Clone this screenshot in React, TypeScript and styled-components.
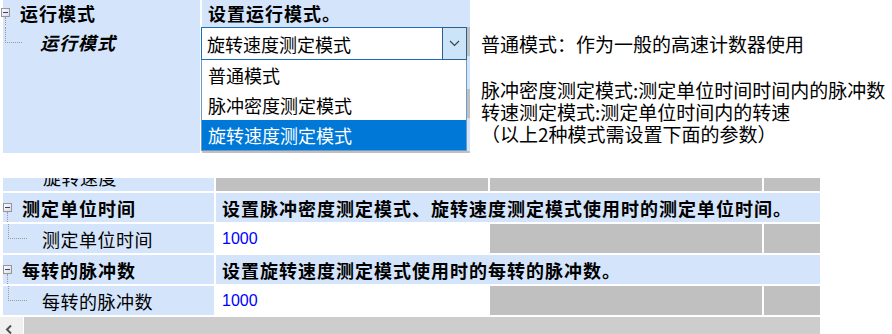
import React from 'react';
import styled, { createGlobalStyle } from 'styled-components';

const LIGHT = '#d4e5fb';
const GRAY = '#c0c0c0';
const CJK = `"Noto Sans CJK SC", "Noto Sans", sans-serif`;

const Global = createGlobalStyle`
  html, body { margin: 0; padding: 0; background: #fff; }
  body { width: 892px; height: 334px; overflow: hidden; font-family: ${CJK}; color: #000; }
  * { box-sizing: border-box; }
`;

const Page = styled.div`
  display: flex;
  flex-direction: column;
  width: 892px;
  height: 334px;
`;

/* ---------- top section ---------- */
const TopSection = styled.div`
  display: flex;
  height: 153px;
  flex-shrink: 0;
`;

const TopPanel = styled.div`
  position: relative;
  width: 470px;
  height: 153px;
  overflow: hidden;
  padding-left: 3px;
  display: flex;
  background: #fff;
`;

const TopLeft = styled.div`
  width: 197px;
  background: ${LIGHT};
  display: flex;
  flex-direction: column;
  gap: 2px;
`;

const TopRight = styled.div`
  flex: 1;
  margin-left: 2px;
  background: ${LIGHT};
  display: flex;
  flex-direction: column;
  gap: 2px;
`;

const TopLabelRow = styled.div<{ $h: number }>`
  height: ${(p) => p.$h}px;
  display: flex;
  align-items: stretch;
  flex-shrink: 0;
`;

const TopRightRow = styled.div<{ $h: number; $kind: 'cat' | 'child' }>`
  height: ${(p) => p.$h}px;
  flex-shrink: 0;
  display: flex;
  align-items: center;
  padding-left: 6px;
  background: ${(p) => (p.$kind === 'cat' ? LIGHT : GRAY)};
  font-weight: 700;
  font-size: 18px;
  letter-spacing: 1px;
  line-height: 1;
  white-space: nowrap;
`;

/* tree decorations */
const TreeIcon = styled.div<{ $left: number; $top: number }>`
  width: 9px;
  margin-left: ${(p) => p.$left}px;
  padding-top: ${(p) => p.$top}px;
  display: flex;
  flex-direction: column;
  align-items: center;
  flex-shrink: 0;
`;

const TreeTail = styled.div`
  flex: 1;
  width: 0;
  border-left: 1px dotted #9a9a9a;
`;

const Connector = styled.div<{ $left: number; $w: number; $h: number }>`
  margin-left: ${(p) => p.$left}px;
  width: ${(p) => p.$w}px;
  height: ${(p) => p.$h}px;
  border-left: 1px dotted #9a9a9a;
  border-bottom: 1px dotted #9a9a9a;
  flex-shrink: 0;
`;

const Label = styled.span<{ $bold?: boolean; $italic?: boolean; $ml: number }>`
  align-self: center;
  margin-left: ${(p) => p.$ml}px;
  font-size: 18px;
  line-height: 1;
  font-weight: ${(p) => (p.$bold ? 700 : 400)};
  font-style: ${(p) => (p.$italic ? 'italic' : 'normal')};
  letter-spacing: ${(p) => (p.$bold ? 1 : 0.5)}px;
  white-space: nowrap;
`;

const MinusBox = () => (
  <svg width="9" height="9" viewBox="0 0 9 9" style={{ display: 'block', flexShrink: 0 }}>
    <defs>
      <linearGradient id="mb" x1="0" y1="0" x2="1" y2="1">
        <stop offset="0" stopColor="#ffffff" />
        <stop offset="1" stopColor="#d8d8e0" />
      </linearGradient>
    </defs>
    <rect x="0.5" y="0.5" width="8" height="8" fill="url(#mb)" stroke="#969696" />
    <line x1="2" y1="4.5" x2="7" y2="4.5" stroke="#3a3a8a" strokeWidth="1" />
  </svg>
);

/* dropdown editor overlay */
const Editor = styled.div`
  position: absolute;
  left: 201px;
  top: 27px;
  width: 266px;
  display: flex;
  flex-direction: column;
  z-index: 2;
`;

const Combo = styled.div`
  height: 33px;
  border: 1px solid #1a6fc0;
  background: #fff;
  display: flex;
  align-items: center;
`;

const ComboText = styled.span`
  flex: 1;
  padding-left: 5px;
  font-size: 18px;
  line-height: 1;
  white-space: nowrap;
`;

const ComboButton = styled.div`
  width: 25px;
  height: 33px;
  margin: -1px -1px -1px 0;
  background: #cce4f7;
  border: 1px solid #2c5f8e;
  display: flex;
  align-items: center;
  justify-content: center;
`;

const List = styled.div`
  border: 1px solid #6f9bc8;
  border-top: none;
  background: #fff;
  display: flex;
  flex-direction: column;
`;

const Option = styled.div<{ $active?: boolean }>`
  height: 30px;
  display: flex;
  align-items: center;
  padding-left: 6px;
  font-size: 18px;
  line-height: 1;
  white-space: nowrap;
  background: ${(p) => (p.$active ? '#0078d7' : '#fff')};
  color: ${(p) => (p.$active ? '#fff' : '#000')};
`;

/* notes */
const Notes = styled.div`
  margin-left: 11px;
  padding-top: 33px;
  display: flex;
  flex-direction: column;
  font-size: 19px;
  line-height: 22px;
  white-space: nowrap;
`;

const NoteBlock = styled.div`
  margin-top: 24px;
  display: flex;
  flex-direction: column;
`;

/* ---------- bottom grid ---------- */
const GridPanel = styled.div`
  margin-top: 25px;
  width: 820px;
  height: 156px;
  display: flex;
  flex-direction: column;
  gap: 2px;
  overflow: hidden;
  flex-shrink: 0;
`;

const Viewport = styled.div`
  height: 137px;
  overflow: hidden;
  padding-left: 3px;
  flex-shrink: 0;
`;

const Rows = styled.div`
  display: flex;
  flex-direction: column;
  gap: 2px;
  margin-top: -16px;
`;

const Row = styled.div`
  display: grid;
  grid-template-columns: 211px 272px 272px 56px;
  column-gap: 2px;
  height: 29px;
  flex-shrink: 0;
`;

const LabelCell = styled.div`
  background: ${LIGHT};
  display: flex;
  align-items: stretch;
  overflow: hidden;
`;

const DescCell = styled.div`
  grid-column: 2 / -1;
  background: ${LIGHT};
  display: flex;
  align-items: center;
  padding-left: 6px;
  font-size: 18px;
  font-weight: 700;
  letter-spacing: 1px;
  line-height: 1;
  white-space: nowrap;
  overflow: hidden;
`;

const ValueCell = styled.div`
  background: #fff;
  display: flex;
  align-items: center;
  padding-left: 6px;
  font-family: "Liberation Sans", Arial, sans-serif;
  font-size: 16px;
  color: #0000ff;
`;

const GrayCell = styled.div`
  background: ${GRAY};
`;

const ScrollBar = styled.div`
  height: 17px;
  display: flex;
  flex-shrink: 0;
`;

const ScrollButton = styled.div`
  width: 23px;
  background: #f0f0f0;
  display: flex;
  align-items: flex-end;
  padding-left: 5px;
`;

const ScrollTrack = styled.div`
  flex: 1;
  margin-left: 1px;
  background: #cdcdcd;
`;

type Item = { cat: string; desc: string; child: string; value: string };

const items: Item[] = [
  {
    cat: '测定单位时间',
    desc: '设置脉冲密度测定模式、旋转速度测定模式使用时的测定单位时间。',
    child: '测定单位时间',
    value: '1000',
  },
  {
    cat: '每转的脉冲数',
    desc: '设置旋转速度测定模式使用时的每转的脉冲数。',
    child: '每转的脉冲数',
    value: '1000',
  },
];

export default function App() {
  return (
    <Page>
      <Global />
      <TopSection>
        <TopPanel>
          <TopLeft>
            <TopLabelRow $h={25}>
              <TreeIcon $left={-2} $top={8}>
                <MinusBox />
                <TreeTail />
              </TreeIcon>
              <Label $bold $ml={10}>运行模式</Label>
            </TopLabelRow>
            <TopLabelRow $h={29}>
              <Connector $left={2} $w={17} $h={16} />
              <Label $bold $italic $ml={18}>运行模式</Label>
            </TopLabelRow>
          </TopLeft>
          <TopRight>
            <TopRightRow $h={25} $kind="cat">设置运行模式。</TopRightRow>
            <TopRightRow $h={29} $kind="child" />
            <TopRightRow $h={29} $kind="cat" />
            <TopRightRow $h={29} $kind="child" />
            <TopRightRow $h={29} $kind="cat" />
            <TopRightRow $h={29} $kind="child" />
          </TopRight>
          <Editor>
            <Combo>
              <ComboText>旋转速度测定模式</ComboText>
              <ComboButton>
                <svg width="11" height="7" viewBox="0 0 11 7">
                  <polyline points="1,1 5.5,5.5 10,1" fill="none" stroke="#404040" strokeWidth="1.2" />
                </svg>
              </ComboButton>
            </Combo>
            <List>
              <Option>普通模式</Option>
              <Option>脉冲密度测定模式</Option>
              <Option $active>旋转速度测定模式</Option>
            </List>
          </Editor>
        </TopPanel>
        <Notes>
          <span>普通模式：作为一般的高速计数器使用</span>
          <NoteBlock>
            <span>脉冲密度测定模式:测定单位时间时间内的脉冲数</span>
            <span>转速测定模式:测定单位时间内的转速</span>
            <span>（以上2种模式需设置下面的参数）</span>
          </NoteBlock>
        </Notes>
      </TopSection>

      <GridPanel>
        <Viewport>
          <Rows>
            <Row>
              <LabelCell>
                <Label $ml={40}>旋转速度</Label>
              </LabelCell>
              <GrayCell />
              <GrayCell />
              <GrayCell />
            </Row>
            {items.map((it) => (
              <React.Fragment key={it.cat}>
                <Row>
                  <LabelCell>
                    <TreeIcon $left={0} $top={10}>
                      <MinusBox />
                      <TreeTail />
                    </TreeIcon>
                    <Label $bold $ml={10}>{it.cat}</Label>
                  </LabelCell>
                  <DescCell>{it.desc}</DescCell>
                </Row>
                <Row>
                  <LabelCell>
                    <Connector $left={5} $w={19} $h={15} />
                    <Label $ml={15}>{it.child}</Label>
                  </LabelCell>
                  <ValueCell>{it.value}</ValueCell>
                  <GrayCell />
                  <GrayCell />
                </Row>
              </React.Fragment>
            ))}
          </Rows>
        </Viewport>
        <ScrollBar>
          <ScrollButton>
            <svg width="8" height="9" viewBox="0 0 8 9" style={{ display: 'block' }}>
              <polyline points="6,0.5 2,4.5 6,8.5" fill="none" stroke="#505050" strokeWidth="2" />
            </svg>
          </ScrollButton>
          <ScrollTrack />
        </ScrollBar>
      </GridPanel>
    </Page>
  );
}
